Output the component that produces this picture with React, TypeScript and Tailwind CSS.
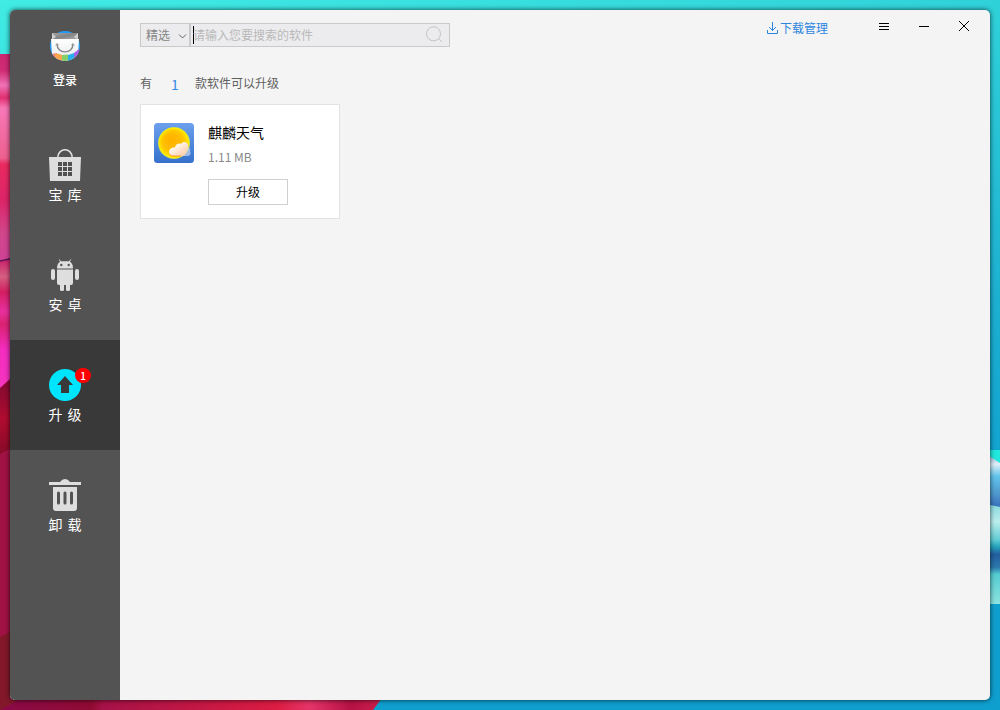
import type { ReactNode } from "react";

function Wallpaper() {
  return (
    <svg className="absolute inset-0" width="1000" height="710" viewBox="0 0 1000 710" aria-hidden="true">
      <defs>
        <linearGradient id="sky" gradientUnits="userSpaceOnUse" x1="0" y1="0" x2="150" y2="710">
          <stop offset="0" stopColor="#41ece4" />
          <stop offset="0.26" stopColor="#31d4da" />
          <stop offset="0.7" stopColor="#1cafd0" />
          <stop offset="0.95" stopColor="#10a0d0" />
          <stop offset="1" stopColor="#0f9fcf" />
        </linearGradient>
        <linearGradient id="pink" gradientUnits="userSpaceOnUse" x1="0" y1="54" x2="0" y2="262">
          <stop offset="0" stopColor="#cb2670" />
          <stop offset="0.08" stopColor="#cf2c74" />
          <stop offset="0.15" stopColor="#f272b8" />
          <stop offset="0.21" stopColor="#e23070" />
          <stop offset="0.26" stopColor="#f878b8" />
          <stop offset="0.5" stopColor="#ee6090" />
          <stop offset="0.53" stopColor="#ea2a60" />
          <stop offset="0.7" stopColor="#dc2468" />
          <stop offset="0.86" stopColor="#d2468c" />
          <stop offset="1" stopColor="#cf4296" />
        </linearGradient>
        <linearGradient id="magenta" gradientUnits="userSpaceOnUse" x1="0" y1="260" x2="0" y2="388">
          <stop offset="0" stopColor="#cc246c" />
          <stop offset="0.13" stopColor="#d65f82" />
          <stop offset="0.25" stopColor="#d31e60" />
          <stop offset="0.4" stopColor="#e8309e" />
          <stop offset="0.5" stopColor="#d92270" />
          <stop offset="0.7" stopColor="#f42cc0" />
          <stop offset="1" stopColor="#f535c0" />
        </linearGradient>
        <linearGradient id="crimson" gradientUnits="userSpaceOnUse" x1="0" y1="385" x2="0" y2="452">
          <stop offset="0" stopColor="#850a30" />
          <stop offset="0.5" stopColor="#b00c30" />
          <stop offset="1" stopColor="#8a0a28" />
        </linearGradient>
        <linearGradient id="floor" gradientUnits="userSpaceOnUse" x1="10" y1="0" x2="380" y2="0">
          <stop offset="0" stopColor="#8b0a45" />
          <stop offset="0.22" stopColor="#900b34" />
          <stop offset="0.25" stopColor="#a51247" />
          <stop offset="0.72" stopColor="#dc1c42" />
          <stop offset="0.81" stopColor="#e53468" />
          <stop offset="0.92" stopColor="#b61246" />
          <stop offset="1" stopColor="#cb1e4a" />
        </linearGradient>
        <linearGradient id="glass" gradientUnits="userSpaceOnUse" x1="0" y1="457" x2="0" y2="505">
          <stop offset="0" stopColor="#a4c4e0" />
          <stop offset="0.15" stopColor="#e0f0fa" />
          <stop offset="0.4" stopColor="#62c4ea" />
          <stop offset="0.8" stopColor="#4d94cc" />
          <stop offset="1" stopColor="#3c74be" />
        </linearGradient>
        <linearGradient id="wave" gradientUnits="userSpaceOnUse" x1="0" y1="505" x2="0" y2="604">
          <stop offset="0" stopColor="#8cd8dc" />
          <stop offset="0.17" stopColor="#bceeee" />
          <stop offset="0.35" stopColor="#62cdd4" />
          <stop offset="0.42" stopColor="#25a4bc" />
          <stop offset="0.5" stopColor="#245e9e" />
          <stop offset="0.63" stopColor="#2c78ac" />
          <stop offset="0.7" stopColor="#54cbd0" />
          <stop offset="1" stopColor="#8ce4e0" />
        </linearGradient>
      </defs>
      <rect width="1000" height="710" fill="url(#sky)" />
      <path d="M0 54H20V258L0 262Z" fill="url(#pink)" />
      <path d="M0 261L20 256V374L0 389Z" fill="url(#magenta)" />
      <path d="M0 261L14 258" stroke="#5c1654" strokeWidth="1.500" />
      <path d="M0 388L20 370V443L0 455Z" fill="url(#crimson)" />
      <path d="M0 454L20 443V710H0Z" fill="#a11244" />
      <path d="M0 637L20 627V710H0Z" fill="#82182a" />
      <path d="M22 698H382L373 710H0Z" fill="url(#floor)" />
      <path d="M985 450H1000V465L985 455Z" fill="#20e8dc" />
      <path d="M985 453L1000 463V507L985 504Z" fill="url(#glass)" />
      <path d="M985 504L1000 507V604H985Z" fill="url(#wave)" />
    </svg>
  );
}

function LogoIcon() {
  return (
    <svg width="32" height="32" viewBox="0 0 32 32" className="block">
      <defs>
        <clipPath id="logoRound">
          <circle cx="16" cy="16" r="15" />
        </clipPath>
        <linearGradient id="bagInside" x1="0" y1="0" x2="1" y2="1">
          <stop offset="0" stopColor="#a2a2a2" />
          <stop offset="0.5" stopColor="#858585" />
          <stop offset="1" stopColor="#b0b0b0" />
        </linearGradient>
        <linearGradient id="bagFront" x1="0" y1="0" x2="0" y2="1">
          <stop offset="0" stopColor="#ffffff" />
          <stop offset="1" stopColor="#e5e7eb" />
        </linearGradient>
      </defs>
      <g clipPath="url(#logoRound)">
        <rect width="32" height="32" fill="#239af5" />
        <path d="M2 9H30L28.500 32H3.500Z" fill="url(#bagFront)" />
        <path d="M3 24L8 23L8 32H0Z" fill="#f4796b" />
        <path d="M5.500 24Q9 23 13 25V32H8Z" fill="#fda64b" />
        <path d="M13 25L19 24.500V32H13Z" fill="#86cf68" />
        <path d="M19 25L25 23V32H19Z" fill="#27b2ec" />
        <path d="M25 23L30 19V29L25 32Z" fill="#a55ee8" />
      </g>
      <path d="M3 3H29V9.500H3Z" fill="url(#bagInside)" />
      <path d="M3 3L7 7L3 9.500ZM29 3L25 7L29 9.500Z" fill="#d0d0d0" />
      <path d="M2 9.500H30" stroke="#f8f8f8" />
      <path d="M8 14C8 24.500 24 24.500 24 14" fill="none" stroke="#858585" strokeWidth="1.400" />
      <path d="M6.700 15.500L8 13.500L9.700 15.200M22.300 15.200L24 13.500L25.300 15.500" fill="none" stroke="#999" />
    </svg>
  );
}

function BagIcon() {
  return (
    <svg width="32" height="33" viewBox="0 0 32 33" className="block">
      <path d="M0 8H32L31 32H1Z" fill="#dedede" />
      <path d="M8.700 9C8.700 -2 23.300 -2 23.300 9" fill="none" stroke="#dedede" strokeWidth="1.600" />
      <path
        d="M9 13h4v4H9zM14 13h4v4h-4zM19 13h4v4h-4zM9 18h4v4H9zM14 18h4v4h-4zM19 18h4v4h-4zM9 23h4v4H9zM14 23h4v4h-4zM19 23h4v4h-4z"
        fill="#505050"
      />
    </svg>
  );
}

function AndroidIcon() {
  return (
    <svg width="32" height="33" viewBox="0 1 32 33" className="block" fill="#dedede">
      <path d="M8 10.500C8 6.500 9.500 4.500 12 3.300L20 3.300C22.500 4.500 24 6.500 24 10.500Z" />
      <path d="M10.300 1.500L12 4.500M21.700 1.500L20 4.500" stroke="#dedede" />
      <path d="M8 11.500H24V25Q24 27 22 27H10Q8 27 8 25Z" />
      <rect x="2" y="11" width="4" height="11" rx="2" />
      <rect x="26" y="11" width="4" height="11" rx="2" />
      <rect x="11" y="25" width="4" height="8" rx="1.500" />
      <rect x="17" y="25" width="4" height="8" rx="1.500" />
      <circle cx="12.300" cy="7" r="1.200" fill="#555" />
      <circle cx="19.700" cy="7" r="1.200" fill="#555" />
    </svg>
  );
}

function UpgradeIcon() {
  return (
    <svg width="32" height="32" viewBox="0 0 32 32" className="block">
      <circle cx="16" cy="16" r="16" fill="#00e5ff" />
      <path d="M16 7L24 16H20V24H12V16H8Z" fill="#3a3a3a" />
    </svg>
  );
}

function TrashIcon() {
  return (
    <svg width="32" height="32" viewBox="0 0 32 32" className="block">
      <path d="M0 3H11Q13 0 16 0T21 3H32V6H0Z" fill="#dedede" />
      <path d="M4 8H28V29Q28 32 25 32H7Q4 32 4 29Z" fill="#dedede" />
      <path d="M9.500 14V24M16 14V24M22.500 14V24" stroke="#535353" strokeWidth="3" strokeLinecap="round" />
    </svg>
  );
}

function WeatherIcon() {
  return (
    <svg width="40" height="40" viewBox="0 0 40 40" className="block shrink-0">
      <defs>
        <linearGradient id="weatherSky" x1="0" y1="0" x2="0" y2="1">
          <stop offset="0" stopColor="#6ca0ee" />
          <stop offset="1" stopColor="#3570cb" />
        </linearGradient>
        <radialGradient id="sun" cx="0.5" cy="0.5" r="0.5" fx="0.4" fy="0.4">
          <stop offset="0" stopColor="#ffb000" />
          <stop offset="0.5" stopColor="#ffbc00" />
          <stop offset="0.75" stopColor="#ffcc00" />
          <stop offset="0.92" stopColor="#ffec00" />
          <stop offset="1" stopColor="#b8d470" />
        </radialGradient>
        <linearGradient id="cloud" x1="0" y1="0" x2="1" y2="1">
          <stop offset="0.300" stopColor="#fff8ef" />
          <stop offset="1" stopColor="#ffc39a" />
        </linearGradient>
      </defs>
      <rect width="40" height="40" rx="3.500" fill="url(#weatherSky)" />
      <circle cx="20" cy="20" r="16" fill="url(#sun)" />
      <path d="M20 33L24 25L34 24Q37 26 36 28Q38 33 33 33Z" fill="#c8d9ee" fillOpacity="0.7" />
      <path
        d="M18 33C14.500 32 14 27 17 25.500C18 24 20 24.500 21 24.500C22 20.500 25 20 27 21C29 18 33 18.500 34 21.500C35 24 34 27 32.500 28.500C32 32 29 33.500 26 33Z"
        fill="url(#cloud)"
      />
      <path d="M15.500 31Q17 33.500 20 33H27" stroke="#fa8424" strokeWidth="0.800" fill="none" />
    </svg>
  );
}

function NavItem({ icon, label, active, badge }: { icon: ReactNode; label: string; active?: boolean; badge?: number }) {
  return (
    <button className={`flex h-[110px] w-full flex-col items-center pt-[29px] ${active ? "bg-[#393939]" : ""}`}>
      <span className="relative h-[33px] w-8">
        {icon}
        {badge !== undefined && (
          <span className="absolute -top-[1px] left-[26px] flex h-[15px] w-4 items-center justify-center rounded-full bg-[#ff0000] text-[10px] leading-[15px] font-medium text-white">
            {badge}
          </span>
        )}
      </span>
      <span className="mt-[2px] text-[14px] leading-5 text-white [word-spacing:2px]">{label}</span>
    </button>
  );
}

function Sidebar() {
  return (
    <nav className="flex w-[110px] shrink-0 flex-col bg-[#535353]">
      <div className="flex h-[110px] flex-col items-center pt-5">
        <LogoIcon />
        <span className="mt-[9px] text-[12px] leading-[18px] font-medium text-white">登录</span>
      </div>
      <NavItem icon={<BagIcon />} label="宝 库" />
      <NavItem icon={<AndroidIcon />} label="安 卓" />
      <NavItem icon={<UpgradeIcon />} label="升 级" active badge={1} />
      <NavItem icon={<TrashIcon />} label="卸 载" />
    </nav>
  );
}

function SearchBox() {
  return (
    <div className="mt-[13px] flex h-6 w-[310px] border border-[#c9c9c9] bg-[#ececee]">
      <button className="flex w-[50px] items-center justify-between border-r-2 border-[#c9c9c9] pr-[2px] pl-[5px] text-[12px] leading-[22px] text-[#858585]">
        精选
        <svg width="9" height="9" viewBox="0 0 9 9" className="mt-[3px]">
          <path d="M1 2.500L4.500 6L8 2.500" fill="none" stroke="#666" />
        </svg>
      </button>
      <div className="my-[2px] ml-[2px] w-px bg-black" />
      <span className="-ml-px flex-1 text-[12px] leading-[22px] text-[#b9b9b9]">请输入您要搜索的软件</span>
      <svg width="18" height="18" viewBox="0 0 18 18" className="mt-[2px] mr-[5px]" fill="none" stroke="#c3c3c3">
        <circle cx="7.500" cy="7.800" r="7" />
        <path d="M12.500 12.500L16 16" />
      </svg>
    </div>
  );
}

function TitleBar() {
  return (
    <header className="flex h-12 items-start justify-between pl-5">
      <SearchBox />
      <div className="flex">
        <button className="mt-2 mr-[36px] flex h-5 items-center text-[12px] leading-5 text-[#2c86e0]">
          <svg width="12" height="12" viewBox="0 0 12 12" className="mr-[1px]" fill="none" stroke="#2c86e0">
            <path d="M5.500 0V8.500M2 5L5.500 8.500L9 5M0.500 8V11.500H10.500V8" />
          </svg>
          下载管理
        </button>
        <button className="flex h-8 w-10 items-center justify-center" aria-label="菜单">
          <svg width="10" height="8" viewBox="0 0 10 8" fill="none" stroke="#000">
            <path d="M0 1.500H10M0 4.500H10M0 7.500H10" />
          </svg>
        </button>
        <button className="flex h-8 w-10 items-center justify-center" aria-label="最小化">
          <svg width="10" height="2" viewBox="0 0 10 2" fill="none" stroke="#000">
            <path d="M0 1.500H10" />
          </svg>
        </button>
        <button className="mr-[6px] flex h-8 w-10 items-center justify-center" aria-label="关闭">
          <svg width="12" height="12" viewBox="0 0 12 12" fill="none" stroke="#000">
            <path d="M1 1L11 11M11 1L1 11" />
          </svg>
        </button>
      </div>
    </header>
  );
}

function AppCard() {
  return (
    <article className="ml-5 flex h-[115px] w-[200px] border border-[#e2e2e2] bg-white pt-[18px] pl-[13px]">
      <WeatherIcon />
      <div className="ml-[14px] flex flex-col">
        <h2 className="-mt-px text-[14px] leading-5 text-black">麒麟天气</h2>
        <p className="mt-[6px] text-[12px] leading-[18px] text-[#888]">1.11 MB</p>
        <button className="mt-[13px] h-[26px] w-20 border border-[#cfcfcf] text-[12px] leading-6 text-black">升级</button>
      </div>
    </article>
  );
}

export default function App() {
  return (
    <div className="relative h-[710px] w-[1000px] overflow-hidden p-[10px] font-['Noto_Sans_CJK_SC',sans-serif]">
      <Wallpaper />
      <main className="relative flex h-[690px] w-[980px] overflow-hidden rounded-[5px] bg-[#f4f4f4] shadow-[0_0_5px_rgba(0,0,0,0.75)]">
        <Sidebar />
        <section className="flex-1">
          <TitleBar />
          <div className="mt-4 flex h-[30px] pl-5 text-[12px] leading-[18px] text-[#606060]">
            <span>有</span>
            <span className="mt-[1px] ml-[19px] w-6 text-[14px] text-[#348ce4]">1</span>
            <span>款软件可以升级</span>
          </div>
          <AppCard />
        </section>
      </main>
    </div>
  );
}
